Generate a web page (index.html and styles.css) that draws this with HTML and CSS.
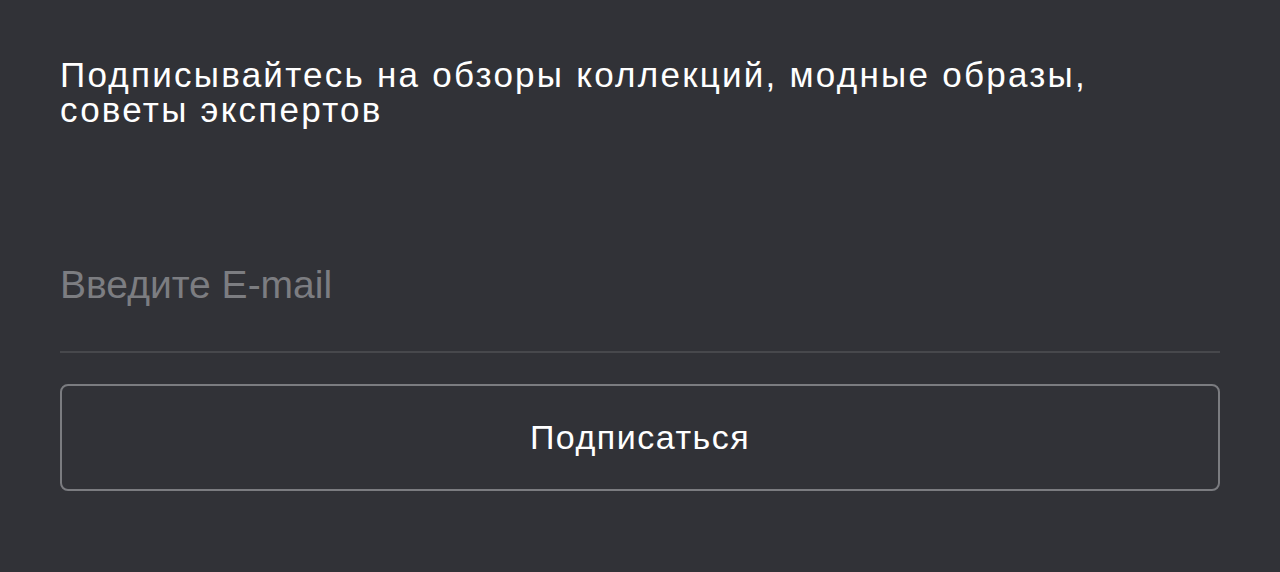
FILE: index.html
```html
<!DOCTYPE html>
<html lang="ru">
<head>
<meta charset="utf-8">
<link rel="stylesheet" href="styles.css">
</head>
<body>
<section class="subscribe">
  <p class="lead">Подписывайтесь на обзоры коллекций, модные образы, советы экспертов</p>
  <form class="form">
    <input class="email" type="text" placeholder="Введите E-mail">
    <button class="btn" type="button">Подписаться</button>
  </form>
</section>
</body>
</html>
```
FILE: styles.css
```css
html, body {
  margin: 0;
  height: 100%;
  background: #313237;
}
body {
  font-family: "Liberation Sans", Arial, sans-serif;
}
.subscribe {
  padding: 57px 60px 0 60px;
}
.lead {
  margin: 0;
  color: #ffffff;
  font-size: 35px;
  line-height: 35px;
  letter-spacing: 2.25px;
}
.form {
  margin-top: 135px;
  display: flex;
  flex-direction: column;
}
.email {
  height: 45px;
  padding: 0 0 44px 0;
  background: transparent;
  border: none;
  border-bottom: 2px solid #47484c;
  color: #fff;
  font-family: inherit;
  font-size: 39px;
  line-height: 45px;
  outline: none;
}
.email::placeholder {
  color: #7c7d81;
}
.btn {
  margin-top: 31px;
  height: 107px;
  background: transparent;
  border: 2px solid #7b7c80;
  border-radius: 8px;
  color: #ffffff;
  font-family: inherit;
  font-size: 34px;
  letter-spacing: 1.5px;
  cursor: pointer;
}
```
